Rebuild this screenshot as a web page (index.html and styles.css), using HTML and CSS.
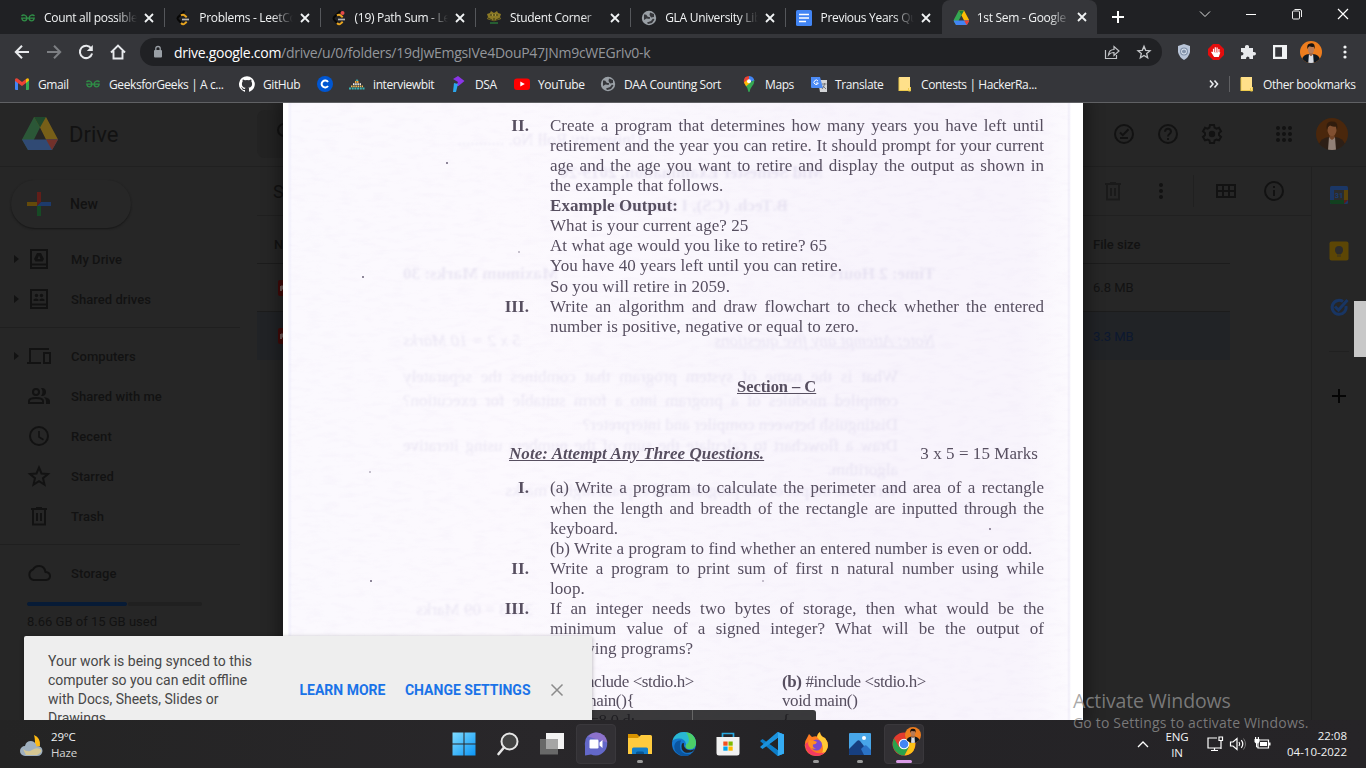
FILE: index.html
```html
<!DOCTYPE html>
<html lang="en">
<head>
<meta charset="utf-8">
<title>1st Sem - Google Drive</title>
<link rel="stylesheet" href="styles.css">
</head>
<body>
<svg class="defs" width="0" height="0">
  <defs>
    <symbol id="close" viewBox="0 0 16 16"><path d="M4 4l8 8M12 4l-8 8" stroke="#f1f3f4" stroke-width="1.8" fill="none"/></symbol>
    <symbol id="gfg" viewBox="0 0 16 16"><path d="M1.500 6C3 4.300 6.500 4.600 7 8.200C6.500 11.800 2.500 11.800 1.800 8.200H14.200C13.500 11.800 9.500 11.800 9 8.200C9.500 4.600 13 4.300 14.500 6" stroke="#2f8d46" stroke-width="1.300" fill="none"/></symbol>
    <symbol id="leet" viewBox="0 0 16 16"><path d="M9.500 1L3 7.200q-1 1.200 0 2.400l3.500 3.600" stroke="#070706" stroke-width="2" fill="none"/><path d="M6 5.500q2-1.500 4 .2l1.700 1.500M6 13q2.500 2.500 4 .3l1.700-1.600" stroke="#e7a41f" stroke-width="2" fill="none"/><path d="M7 9.500h7" stroke="#b3b3b3" stroke-width="1.700"/></symbol>
    <symbol id="globe" viewBox="0 0 16 16"><circle cx="8" cy="8" r="7.200" fill="#9aa0a6"/><path d="M3 4.500q2.500-.5 3 1.200t3 1.300l-.3 2-3.200-.4L3 10zM9 2.500l4 1.500v3l-3 .5L8.500 5zM6 12.500l4-1.500 2-2.500 1.500 1-2.500 3.500-4 1z" fill="#35363a"/></symbol>
    <symbol id="drive" viewBox="0 0 36 33"><path d="M12 0h12l-6 10.500L12 22.500 6 33 0 22.500z" fill="#34a853"/><path d="M12 0h12l12 22.500H24L18 10.500z" fill="#fbbc04"/><path d="M0 22.500h36L30 33H6z" fill="#4285f4"/><path d="M24 22.500h12L30 33z" fill="#ea4335"/><path d="M12 0h12l-6 10.500z" fill="#188038"/></symbol>
    <symbol id="folder" viewBox="0 0 16 16"><path d="M2 1h11v10.500h1V15H2z" fill="#ffe08a"/><path d="M2 15V1.500M2 14.500h11M13.500 11v4h-2v-3" stroke="#eecb4c" fill="none"/></symbol>
    <symbol id="star" viewBox="0 0 24 24"><path d="M12 3.500l2.500 6 6.500.5-5 4.200 1.500 6.400L12 17.200l-5.500 3.400L8 14.200 3 10l6.500-.5z" fill="none" stroke="currentColor" stroke-width="2"/></symbol>
    <symbol id="face" viewBox="0 0 32 32"><path d="M3 26q2-6 10-7h6q8 1 10 7l-4 6H7z" fill="#101820"/><path d="M13 19l3 2 3-2 1 13h-8z" fill="#d9dce2"/><path d="M13.500 15h5v5l-2.500 2-2.500-2z" fill="#9c6544"/><ellipse cx="16" cy="12" rx="4.500" ry="6" fill="#b87b56"/><path d="M11 12Q9 4 15 3.500 23 2.500 21 12l-1-3.500q-4 .5-6-1l-2 1.500z" fill="#17120f"/></symbol>
    <symbol id="trash" viewBox="0 0 24 24"><path d="M4 5h16M9 4h6M6 5v15.500h12V5M10 9v8M14 9v8" fill="none" stroke="currentColor" stroke-width="2"/></symbol>
    <symbol id="pdf" viewBox="0 0 16 16"><rect width="16" height="16" rx="2" fill="#440b09"/><path d="M3 6v5M3 6.500h2v2H3" stroke="#77615f" fill="none"/></symbol>
  </defs>
</svg>

<header class="tabs">
  <div class="tab"><svg class="i16"><use href="#gfg"/></svg><span class="title">Count all possible</span><svg class="i16"><use href="#close"/></svg></div>
  <div class="tab"><svg class="i16"><use href="#leet"/></svg><span class="title">Problems - LeetCode</span><svg class="i16"><use href="#close"/></svg></div>
  <div class="tab"><svg class="i16" viewBox="0 0 16 16"><use href="#leet"/><circle cx="11.500" cy="3" r="2" fill="#e44b4b"/></svg><span class="title">(19) Path Sum - LeetCode</span><svg class="i16"><use href="#close"/></svg></div>
  <div class="tab"><svg class="i16" viewBox="0 0 16 16"><path d="M1 4l3-1 1-2 3 2 3-2 1 2 3 1-1 3 1 2-3 1-4 1-4-1-3-1 1-2z" fill="#8c7a25"/><path d="M2 8l4 2M14 8l-4 2M4 5h8M8 8v5" stroke="#3d3b19" fill="none"/><path d="M4 12h8v2H4z" fill="#255d32"/><path d="M6 5h1M9 5h1" stroke="#e7cf61"/></svg><span class="title">Student Corner</span><svg class="i16"><use href="#close"/></svg></div>
  <div class="tab"><svg class="i16"><use href="#globe"/></svg><span class="title">GLA University Library</span><svg class="i16"><use href="#close"/></svg></div>
  <div class="tab nosep"><svg class="i16" viewBox="0 0 16 16"><rect width="16" height="16" rx="1.500" fill="#4285f4"/><path d="M3 4.500h10M3 8h10M3 11.500h7" stroke="#fff" stroke-width="1.600"/></svg><span class="title">Previous Years Question</span><svg class="i16"><use href="#close"/></svg></div>
  <div class="tab active"><svg class="i16" viewBox="-1 -2 38 37"><use href="#drive"/></svg><span class="title">1st Sem - Google Drive</span><svg class="i16"><use href="#close"/></svg></div>
  <svg class="newtab" viewBox="0 0 14 14"><path d="M7 1v12M1 7h12" stroke="#fff" stroke-width="2"/></svg>
  <div class="winctl">
    <svg viewBox="0 0 14 14"><path d="M2 4.500l5 5 5-5" stroke="#ddd" fill="none"/></svg>
    <svg viewBox="0 0 14 14"><path d="M2 7.500h10" stroke="#fff"/></svg>
    <svg viewBox="0 0 14 14"><path d="M2.500 5q0-1 1-1h5q1 0 1 1v6q0 1-1 1h-5q-1 0-1-1zM4.500 2.500h5.500q1.500 0 1.500 1.500v6" stroke="#eee" fill="none"/></svg>
    <svg viewBox="0 0 14 14"><path d="M2 2l10 10M12 2L2 12" stroke="#fff" stroke-width="1.200"/></svg>
  </div>
</header>

<nav class="toolbar">
  <svg class="i16" viewBox="0 0 16 16"><path d="M15 8H2M8 1.800L1.800 8 8 14.200" stroke="#e8eaed" stroke-width="2" fill="none"/></svg>
  <svg class="i16" viewBox="0 0 16 16"><path d="M1 8h13M8 1.800L14.200 8 8 14.200" stroke="#7d7f83" stroke-width="2" fill="none"/></svg>
  <svg class="i16" viewBox="0 0 16 16"><path d="M13.300 4.500A6.200 6.200 0 1 0 14.100 9.500" stroke="#e8eaed" stroke-width="2" fill="none"/><path d="M14.800 1v6H8.800z" fill="#e8eaed"/></svg>
  <svg class="i16" viewBox="0 0 16 16"><path d="M1 8.500L8 1.500l7 7M3.500 7v7.500h9V7" stroke="#e8eaed" stroke-width="1.900" fill="none"/></svg>
  <div class="omnibox">
    <svg class="i16" viewBox="0 0 16 16"><rect x="4" y="6" width="8" height="7.500" rx="1" fill="#9aa0a6"/><path d="M5.800 6V4.500q0-2 2.200-2t2.200 2V6" stroke="#9aa0a6" stroke-width="1.300" fill="none"/></svg>
    <span class="url"><b>drive.google.com</b>/drive/u/0/folders/19dJwEmgsIVe4DouP47JNm9cWEGrIv0-k</span>
    <svg class="i16" viewBox="0 0 16 16"><path d="M1.500 6v8.500h11V11" stroke="#c3c5c8" stroke-width="1.200" fill="none"/><path d="M4.500 11q.5-5.500 5.500-5.500V2.500L15 7l-5 4.500V8.500Q6.500 8.300 4.500 11z" stroke="#c3c5c8" stroke-width="1.200" fill="none"/></svg>
    <svg class="i16 ostar"><use href="#star"/></svg>
  </div>
  <svg class="i16" viewBox="0 0 16 16"><path d="M8 0l6 2v6q-1 5-6 8-5-3-6-8V2z" fill="#b9c5d8"/><circle cx="8" cy="7.500" r="4" fill="#8393ab"/><circle cx="8" cy="7.500" r="2.500" stroke="#dfe7f2" fill="none"/></svg>
  <svg class="i16" viewBox="0 0 16 16"><path d="M5 0h6l5 5v6l-5 5H5l-5-5V5z" fill="#e40d0d"/><path d="M5.500 9V4.800M7.300 8V3.300M9.100 8V3.500M10.900 9V5M4 8.500l2.500 4h3.800l1.200-3.500z" stroke="#fff" stroke-width="1.200" fill="#fff"/></svg>
  <svg class="i16" viewBox="0 0 16 16"><path d="M1 4h4q-.5-3 2-3t2 3h4v4q3-.5 3 1.500T13 11.500V15H9.500q.3-2.500-1.700-2.500T6 15H1v-3.500q2.500.2 2.500-1.700T1 8z" fill="#e8eaed"/></svg>
  <svg class="i16" viewBox="0 0 16 16"><path d="M1 1h14v14H1zM3.200 3.200v9.600H10V3.200z" fill="#f1f3f4" fill-rule="evenodd"/></svg>
  <span class="pface"><svg viewBox="0 0 32 32"><use href="#face"/></svg></span>
  <svg class="i16 kebab" viewBox="0 0 16 16"><g fill="#f1f3f4"><circle cx="8" cy="3" r="1.600"/><circle cx="8" cy="8" r="1.600"/><circle cx="8" cy="13" r="1.600"/></g></svg>
</nav>

<nav class="bookmarks">
  <div><svg class="i16" viewBox="0 0 16 16"><path d="M1 3.500h3V14H2q-1 0-1-1z" fill="#4285f4"/><path d="M12 3.500h3V13q0 1-1 1h-2z" fill="#34a853"/><path d="M1 4q0-2.500 2.500-1.500L8 6l4-3v4L8 10 1 5z" fill="#ea4335"/><path d="M12 3q3-2 3 1.500L12 7z" fill="#fbbc04"/></svg>Gmail</div>
  <div><svg class="i16"><use href="#gfg"/></svg>GeeksforGeeks | A c...</div>
  <div><svg class="i16" viewBox="0 0 16 16"><path d="M8 .2a8 8 0 0 0-2.500 15.600c.4.100.5-.2.500-.4v-1.500c-2.200.5-2.700-1-2.700-1-.400-.9-.9-1.100-.9-1.100-.7-.5.100-.5.100-.5.800.1 1.200.8 1.200.8.700 1.200 1.900.9 2.300.7.100-.5.300-.9.500-1.100-1.800-.2-3.600-.9-3.600-4 0-.9.300-1.600.8-2.100-.1-.2-.4-1 .1-2.100 0 0 .7-.2 2.200.8a7.500 7.500 0 0 1 4 0c1.500-1 2.200-.8 2.200-.8.500 1.100.2 1.900.1 2.100.5.500.8 1.200.8 2.100 0 3.100-1.900 3.700-3.600 3.900.3.300.5.800.5 1.500v2.200c0 .2.200.5.600.4A8 8 0 0 0 8 .2z" fill="#fff"/></svg>GitHub</div>
  <div><svg class="i16" viewBox="0 0 16 16"><circle cx="8" cy="8" r="8" fill="#0056d2"/><path d="M11 6a3.500 3.500 0 1 0 0 4" stroke="#fff" stroke-width="2" fill="none"/></svg></div>
  <div><svg class="i16" viewBox="0 0 16 16"><path d="M6.500 5l1.500-2 1.500 2z" fill="#3ab2b1"/><path d="M6 6h4" stroke="#f4a63b" stroke-width="1.800" stroke-dasharray="1.500 .5"/><path d="M4 8.200h8" stroke="#eee" stroke-width="1.800" stroke-dasharray="1.500 .7"/><path d="M2 10.400h12" stroke="#f4bd56" stroke-width="1.800" stroke-dasharray="1.500 .7"/><path d="M0 12.500h16" stroke="#3ab2b1" stroke-width="1.800" stroke-dasharray="2 .7"/></svg>interviewbit</div>
  <div><svg class="i16" viewBox="0 0 16 16"><path d="M2 3l5-3 6.500 5-6 5H5l2-4z" fill="#8a35e8"/><path d="M3 7l4 1-2 8H2z" fill="#2ba7ee"/></svg>DSA</div>
  <div><svg class="i16" viewBox="0 0 16 16"><rect y="2.500" width="16" height="11.500" rx="3" fill="#f00"/><path d="M6.300 5.500v5l4.500-2.500z" fill="#fff"/></svg>YouTube</div>
  <div><svg class="i16"><use href="#globe"/></svg>DAA Counting Sort</div>
  <div><svg class="i16" viewBox="0 0 16 16"><path d="M8 0Q3 .2 2.700 5q0 2 2 4.500L8 6z" fill="#ea4335"/><path d="M8 0q5 .3 5.300 5L8 6z" fill="#4285f4"/><path d="M13.200 4q.5 3-2 6-2 2.500-2.500 5.500-.7 1-1.400 0Q7 12 4.500 9.500z" fill="#34a853"/><path d="M3 6.500L6 4l3 3-3.800 3.200z" fill="#fbbc04"/><circle cx="8" cy="5.200" r="2" fill="#fff"/></svg>Maps</div>
  <div><svg class="i16" viewBox="0 0 16 16"><path d="M7 4h9v12H9z" fill="#d3d5d8"/><path d="M0 1h9l3 11H1q-1 0-1-1z" fill="#4c8bf5"/><path d="M7 5a2.200 2.200 0 1 0 .3 2H5" stroke="#fff" fill="none"/><path d="M11 8h4.500M13.500 7v1q-.5 3-2.500 5M12 10l3 3" stroke="#73777c" fill="none"/></svg>Translate</div>
  <div><svg class="i16"><use href="#folder"/></svg>Contests | HackerRa...</div>
  <div class="more"><svg viewBox="0 0 10 10"><path d="M1 1.500L4 5 1 8.500M5.500 1.500l3 3.500-3 3.500" stroke="#e8eaed" stroke-width="1.600" fill="none"/></svg></div>
  <div class="other"><svg class="i16"><use href="#folder"/></svg>Other bookmarks</div>
</nav>

<main class="content">
  <section class="drive">
    <aside class="side">
      <div class="brand"><svg viewBox="0 0 36 33"><use href="#drive"/></svg><span>Drive</span></div>
      <div class="newrow"><div class="new"><svg viewBox="0 0 24 24"><path d="M10 0h4v10l-4 4z" fill="#611e19"/><path d="M0 10h10v4H0z" fill="#644a0a"/><path d="M14 10h10v4H10z" fill="#1d3a6b"/><path d="M10 14h4v10h-4z" fill="#174a25"/></svg>New</div></div>
      <div class="group">
        <div class="item"><i class="arrow"></i><svg viewBox="0 0 24 24"><path d="M4 3h16v18H4zM4 17.500h16" fill="none" stroke="#121212" stroke-width="2"/><path d="M10 6h4l3 6-1.500 2.500h-7L7 12zM12 8.500L10.500 12h3z" fill="#121212" fill-rule="evenodd"/></svg>My Drive</div>
        <div class="item"><i class="arrow"></i><svg viewBox="0 0 24 24"><path d="M4 3h16v18H4zM4 17.500h16" fill="none" stroke="#121212" stroke-width="2"/><circle cx="9.500" cy="8.500" r="1.700" fill="#121212"/><circle cx="14.500" cy="8.500" r="1.700" fill="#121212"/><path d="M6.500 14v-1.500Q9 10.500 11.500 12.500V14zM12.500 14v-1.500q2.500-2 5 0V14z" fill="#121212"/></svg>Shared drives</div>
      </div>
      <div class="group">
        <div class="item"><i class="arrow"></i><svg viewBox="0 0 24 24"><path d="M22 5H3v13M0 19h14M17 9h6v10h-6z" fill="none" stroke="#121212" stroke-width="2"/></svg>Computers</div>
        <div class="item"><i></i><svg viewBox="0 0 24 24"><circle cx="9" cy="8" r="3" fill="none" stroke="#121212" stroke-width="2"/><path d="M2 19v-2q0-3 7-3t7 3v2z" fill="none" stroke="#121212" stroke-width="2"/><path d="M14 4q5-.5 5 4t-5 4q3-4 0-8zM17 13q6 1 6 4v3h-4v-3q0-2-2-4z" fill="#121212"/></svg>Shared with me</div>
        <div class="item"><i></i><svg viewBox="0 0 24 24"><circle cx="12" cy="12" r="9" fill="none" stroke="#121212" stroke-width="2"/><path d="M12 7v6l4.500 2.700" fill="none" stroke="#121212" stroke-width="1.600"/></svg>Recent</div>
        <div class="item"><i></i><svg><use href="#star"/></svg>Starred</div>
        <div class="item"><i></i><svg><use href="#trash"/></svg>Trash</div>
      </div>
      <div class="group last">
        <div class="item"><i></i><svg viewBox="0 0 24 24"><path d="M6.500 19a5.500 5.500 0 0 1-.5-10.500Q8 5 12 5q5.500 0 6.500 6 4.500.5 4.500 4t-4 4z" fill="none" stroke="#121212" stroke-width="2"/></svg>Storage</div>
        <div class="meter"><b></b><b></b></div>
        <div class="quota">8.66 GB of 15 GB used</div>
      </div>
    </aside>
    <section class="main">
      <div class="head">
        <div class="search"><svg viewBox="0 0 24 24"><circle cx="10" cy="10" r="6" fill="none" stroke="#121212" stroke-width="2"/><path d="M14 14l6 6" stroke="#121212" stroke-width="2"/></svg></div>
        <svg viewBox="0 0 24 24"><circle cx="12" cy="12" r="9"/><path d="M8 10.500l2.800 2.700 5.700-6M8 16h8"/></svg>
        <svg viewBox="0 0 24 24"><circle cx="12" cy="12" r="9"/><path d="M9 9.800q.2-3 3-3t3 2.800Q15 11 13.500 12 12 13 12 14.500M12 16v2"/></svg>
        <svg viewBox="0 0 24 24"><path d="M10 3h4l.6 2.700 1.800 1 2.600-.9 2 3.500-2 1.800v2l2 1.800-2 3.500-2.600-.9-1.800 1L14 21h-4l-.6-2.500-1.800-1-2.600.9-2-3.500 2-1.800v-2L3 9.300l2-3.500 2.600.9 1.800-1z"/><circle cx="12" cy="12" r="3.200" class="solid"/></svg>
        <svg class="apps" viewBox="0 0 24 24"><g class="solid"><circle cx="6" cy="6" r="2"/><circle cx="12" cy="6" r="2"/><circle cx="18" cy="6" r="2"/><circle cx="6" cy="12" r="2"/><circle cx="12" cy="12" r="2"/><circle cx="18" cy="12" r="2"/><circle cx="6" cy="18" r="2"/><circle cx="12" cy="18" r="2"/><circle cx="18" cy="18" r="2"/></g></svg>
        <span class="avatar"><svg viewBox="0 0 32 32"><use href="#face"/></svg></span>
      </div>
      <div class="body">
        <div class="files">
          <div class="crumb"><span>Shared with me</span>
            <svg class="dim"><use href="#trash"/></svg>
            <svg viewBox="0 0 24 24"><g class="solid"><circle cx="12" cy="6" r="2"/><circle cx="12" cy="12" r="2"/><circle cx="12" cy="18" r="2"/></g></svg>
            <i></i>
            <svg viewBox="0 0 24 24"><path d="M3 6h18v12H3zM3 12h18M9 6v12M15 6v12"/></svg>
            <svg viewBox="0 0 24 24"><circle cx="12" cy="12" r="9"/><path d="M12 11v6M12 7v2"/></svg>
          </div>
          <div class="row cap"><span>Name</span><span>File size</span></div>
          <div class="row"><svg><use href="#pdf"/></svg><span>6.8 MB</span></div>
          <div class="row sel"><svg><use href="#pdf"/></svg><span>3.3 MB</span></div>
        </div>
        <div class="rail">
          <svg viewBox="0 0 20 20"><rect x="1" y="1" width="18" height="18" rx="1.500" fill="#1b3766"/><path d="M15 5h4v10h-4z" fill="#5c450a"/><path d="M1 15h14v4H2.500Q1 19 1 17.500z" fill="#12401f"/><path d="M15 15h4l-4 4z" fill="#5a1c18"/><path d="M5 5h10v10H5z" fill="#2c2c2c"/><text x="10" y="12.700" text-anchor="middle" font-size="7.500">31</text></svg>
          <svg viewBox="0 0 20 20"><rect x=".500" y=".500" width="19" height="19" rx="2" fill="#5c4605"/><circle cx="10" cy="9" r="4" fill="#2c2c2c"/><path d="M8 12h4v1H8zM8 15h4" fill="#2c2c2c" stroke="#2c2c2c" stroke-width=".8"/></svg>
          <svg viewBox="0 0 20 20"><path d="M14 4.500A7 7 0 1 0 17 9" stroke="#183563" stroke-width="3" fill="none"/><path d="M6 9.500l3.500 3.500L18.500 3" stroke="#183563" stroke-width="3" fill="none"/></svg>
          <hr>
          <svg viewBox="0 0 20 20"><path d="M10 3v14M3 10h14" stroke="#050505" stroke-width="2"/></svg>
        </div>
      </div>
    </section>
  </section>

  <article class="page">
    <svg class="grain" width="781" height="617"><filter id="g"><feTurbulence type="fractalNoise" baseFrequency=".06 .2" numOctaves="3" seed="4"/><feColorMatrix values="0 0 0 0 .6  0 0 0 0 .5  0 0 0 0 .75  .9 0 0 0 -.4"/></filter><rect width="781" height="617" filter="url(#g)"/></svg>
    <svg class="specks" width="800" height="617"><g fill="#6a6077"><circle cx="164" cy="60" r="1"/><circle cx="80" cy="174" r="1"/><circle cx="88" cy="478" r="1"/><circle cx="87" cy="369" r=".7"/><circle cx="707" cy="426" r=".9"/><circle cx="480" cy="478" r=".7"/><circle cx="236" cy="149" r=".7"/><circle cx="372" cy="184" r=".6"/></g></svg>
    <div class="ghost" aria-hidden="true">
      <p class="g1">University Roll No. ...........</p>
      <p class="g2">Mid Semester Examination, 2019-20</p>
      <p class="g3">B.Tech. (CS), I Semester</p>
      <p class="g5"><span>Time: 2 Hours</span><span>Maximum Marks: 30</span></p>
      <p class="g6"><u>Note: Attempt any five questions</u><span>5 x 2 = 10 Marks</span></p>
      <p class="g7">What is the name of system program that combines the separately compiled modules of a program into a form suitable for execution? Distinguish between compiler and interpreter?</p>
      <p class="g8">Draw a flowchart to calculate the sum of the numbers using iterative algorithm.</p>
      <p class="g9">Write the output of the program and explain higher marks</p>
      <p class="g10">3 x 3 = 09 Marks</p>
    </div>
    <div class="text">
      <div class="q"><b>II.</b><div>
        <p class="j">Create a program that determines how many years you have left until</p>
        <p class="j">retirement and the year you can retire. It should prompt for your current</p>
        <p class="j">age and the age you want to retire and display the output as shown in</p>
        <p>the example that follows.</p>
        <p><strong>Example Output:</strong></p>
        <p>What is your current age? 25</p>
        <p>At what age would you like to retire? 65</p>
        <p>You have 40 years left until you can retire.</p>
        <p>So you will retire in 2059.</p></div></div>
      <div class="q"><b>III.</b><div>
        <p class="j">Write an algorithm and draw flowchart to check whether the entered</p>
        <p>number is positive, negative or equal to zero.</p></div></div>
      <h2><u>Section – C</u></h2>
      <div class="note"><u>Note: Attempt Any Three Questions.</u><span>3 x 5 = 15 Marks</span></div>
      <div class="q"><b>I.</b><div>
        <p class="j">(a) Write a program to calculate the perimeter and area of a rectangle</p>
        <p class="j">when the length and breadth of the rectangle are inputted through the</p>
        <p>keyboard.</p>
        <p>(b) Write a program to find whether an entered number is even or odd.</p></div></div>
      <div class="q"><b>II.</b><div>
        <p class="j">Write a program to print sum of first n natural number using while</p>
        <p>loop.</p></div></div>
      <div class="q"><b>III.</b><div>
        <p class="j">If an integer needs two bytes of storage, then what would be the</p>
        <p class="j">minimum value of a signed integer? What will be the output of</p>
        <p>following programs?</p></div></div>
      <div class="code">
        <div><p><strong>(a)</strong> #include &lt;stdio.h&gt;</p><p>void main(){</p><p>float f=8.0,d;</p></div>
        <div><p><strong>(b)</strong> #include &lt;stdio.h&gt;</p><p>void main()</p><p>{</p></div>
      </div>
    </div>
  </article>
  <div class="pager"><i></i></div>
  <div class="thumb"></div>
  <div class="snack">
    <p>Your work is being synced to this computer so you can edit offline with Docs, Sheets, Slides or Drawings.</p>
    <b>LEARN MORE</b><b>CHANGE SETTINGS</b>
    <svg viewBox="0 0 14 14"><path d="M1.500 1.500l11 11M12.500 1.500l-11 11" stroke="#8b8b8b" stroke-width="1.500"/></svg>
  </div>
</main>

<footer class="taskbar">
  <div class="weather">
    <svg viewBox="0 0 24 24"><path d="M14 1q7 3 6 11l-6 2q2-6 0-13z" fill="#fdb913"/><path d="M5 22a5 5 0 0 1 0-10q1-5 6-5 5 .5 5.500 5.500Q22 11.500 22.500 17 22 22 17 22z" fill="#9fb0bf"/><path d="M3 15q5 4 9 1t8-1-3 6H6z" fill="#d5c793"/></svg>
    <p>29°C<br><span>Haze</span></p>
  </div>
  <div class="apps-row">
    <span><svg viewBox="0 0 24 24"><defs><linearGradient id="w" x2="1" y2="1"><stop stop-color="#7fdcff"/><stop offset="1" stop-color="#0b95f5"/></linearGradient></defs><path d="M.5.500h11v11H.5zM12.500.500h11v11h-11zM.5 12.500h11v11H.5zM12.500 12.500h11v11h-11z" fill="url(#w)"/></svg></span>
    <span><svg viewBox="0 0 24 24"><circle cx="13.500" cy="9.500" r="8" fill="#444" stroke="#e6e6e6" stroke-width="2"/><path d="M8 15.500L2.500 22" stroke="#e6e6e6" stroke-width="2.600" stroke-linecap="round"/></svg></span>
    <span><svg viewBox="0 0 24 24"><path d="M6 1h18v16H6z" fill="#f3f3f3"/><path d="M0 7h18v15.500H0z" fill="#686868"/><path d="M6 7h12v10H6z" fill="#a5a5a5"/></svg></span>
    <span class="tile"><svg viewBox="0 0 24 24"><path d="M12 .5a11.500 11.500 0 1 1-5 22L1 23.500 1 14Q-.5 2 12 .5z" fill="#6368c9"/><path d="M12 .5q10 .5 11.500 10L4 4.500Q7 .8 12 .5z" fill="#8d72cb"/><rect x="5.500" y="7.500" width="9" height="9" rx="1.200" fill="#fff"/><path d="M15.500 10.500l3-2.500v8l-3-2.500z" fill="#fff"/></svg></span>
    <span class="run"><svg viewBox="0 0 24 24"><path d="M0 2h9l2.500 2.500V8H0z" fill="#d89300"/><path d="M0 6h10l3-3h9.500q1.500 0 1.500 1.500V22H0z" fill="#ffcb3e"/><path d="M4 22v-5q0-1.500 1.500-1.500h13q1.500 0 1.500 1.500v5z" fill="#147fca"/><path d="M8 22v-1q0-1.500 1.500-1.500h5q1.500 0 1.500 1.500v1z" fill="#075594"/></svg></span>
    <span><svg viewBox="0 0 24 24"><circle cx="12" cy="12" r="12" fill="#1477cf"/><path d="M.2 9Q3 0 12 0q11 .5 12 10.500 0 6-6 6.500-6 0-4-5Q13 6.500 7 6.500 2 6.500.2 9z" fill="#29b7d2"/><path d="M14 .2q9 1 10 10.500 0 6-6 6.500-5.500 0-4-4.500Q20 9 14 .2z" fill="#4cce68"/><path d="M8 13q-1 10 11 9-5 3.500-10 1.500Q1 20 2.500 13 4 8 9 8.500 8 10 8 13z" fill="#0b559f"/><path d="M12 11q-1 4 3 6.500 4 1.500 8-.500-4 5-10 3.500-5-3-3-9z" fill="#242426"/></svg></span>
    <span><svg viewBox="0 0 24 24"><path d="M6.500 6V1.500h11V6" fill="none" stroke="#29a9e0" stroke-width="1.700"/><path d="M.5 5h23v16q0 2.500-2.500 2.500H3Q.5 23.500.5 21z" fill="#f1f1f1"/><path d="M7.300 9.500h4.300v4.200H7.300z" fill="#f25022"/><path d="M12.500 9.500h4.200v4.200h-4.200z" fill="#7fba00"/><path d="M7.300 14.500h4.300v4.200H7.300z" fill="#00a4ef"/><path d="M12.500 14.500h4.200v4.200h-4.200z" fill="#ffb900"/></svg></span>
    <span><svg viewBox="0 0 24 24"><path d="M17.500 0L24 2.500v19L17.500 24 0 9l2.500-2L18 18z" fill="#0c7cc7"/><path d="M17.500 24L24 21.500v-19L17.500 0 0 15l2.500 2L18 6z" fill="#1b92dd"/><path d="M18 6v12l-7.500-6z" fill="#242426"/><path d="M18 0.200L24 2.500v19L18 23.800z" fill="#35acf3"/></svg></span>
    <span class="run"><svg viewBox="0 0 24 24"><path d="M3 6L5 2l3 3q3-1 5-.5Q13 2 16 0q0 4 5 6 4 5 2.500 10Q21 24 12 24 2 23.500.8 14 .5 9 3 6z" fill="#ff7a21"/><path d="M16 0q0 4 5 6 4 5 2.500 10-2 5-6 6.500Q22 14 13 5q0-3 3-5z" fill="#ffca35"/><path d="M1 12q1 11 11 12 6 0 9-4-7 3-12-1-5-3-3-10z" fill="#f43b62"/><circle cx="12.500" cy="13" r="5.500" fill="#7c4ad0"/><path d="M5 8q5 0 8 2-1 2.500-4 2.500-1 3 3 4-7 1-8-5z" fill="#ff8f22"/></svg></span>
    <span class="run"><svg viewBox="0 0 24 24"><rect x="1" y="1" width="22" height="22" rx="1" fill="#48a6e8"/><path d="M1 17L9 9q1.500-1.500 3 0l11 14H2q-1 0-1-1z" fill="#173f80"/><path d="M13 17l3-3q1.500-1.500 3 0l4 4v5H16z" fill="#2b73c5"/><circle cx="16" cy="6" r="2" fill="#fff"/></svg></span>
    <span class="tile run on"><svg viewBox="0 0 24 24"><circle cx="12" cy="12" r="11.500" fill="#e33b2e"/><path d="M2 6.200Q-1 13 2.500 18q4 5.500 10 5.500L17 15l-5-3-5 3z" fill="#2ba24c"/><path d="M12.500 23.500Q21 23 23 15q1-4-.5-8H12l5 8z" fill="#fbc116"/><circle cx="12" cy="12" r="5.300" fill="#fff"/><circle cx="12" cy="12" r="4.300" fill="#4285f4"/></svg><i class="mini"><svg viewBox="0 0 32 32"><use href="#face"/></svg></i></span>
  </div>
  <div class="tray">
    <svg class="up" viewBox="0 0 14 14"><path d="M2 10l5-5 5 5" stroke="#fff" stroke-width="1.300" fill="none"/></svg>
    <p class="lang">ENG<br>IN</p>
    <svg class="net" viewBox="0 0 18 18"><path d="M11 3H2v10h13V8M5 15.500h7M8.500 13v2.500M13 2h3.500v3.500H13zM15 5.500V14" stroke="#fff" stroke-width="1.200" fill="none"/></svg>
    <svg class="vol" viewBox="0 0 18 18"><path d="M1.500 7h2.500l4-3.500v11L4 11H1.500zM10 7q1.500 2 0 4M12.300 5.200q3 3.800 0 7.600" stroke="#fff" stroke-width="1.200" fill="none"/><path d="M14.500 3.500q4 5.500 0 11" stroke="#777" fill="none"/></svg>
    <svg class="bat" viewBox="0 0 18 18"><path d="M5 5h10.500v8H5z" fill="none" stroke="#fff" stroke-width="1.200"/><path d="M7 7h7v4H7zM15.500 7.500h2v3h-2zM1.500 4h5v3q-2.500 3-5 0zM2 2h1.200v2H2zM4.800 2H6v2H4.800z" fill="#fff"/><path d="M3.500 8v4H5" stroke="#fff" fill="none"/></svg>
    <p class="clock">22:08<br>04-10-2022</p>
  </div>
</footer>
<div class="watermark"><h3>Activate Windows</h3><p>Go to Settings to activate Windows.</p></div>
</body>
</html>
```

FILE: styles.css
```css
* { box-sizing: border-box; }
body { margin: 0; width: 1366px; height: 768px; overflow: hidden; display: flex; flex-direction: column; position: relative; background: #202124; font-family: "Open Sans", "Noto Sans", sans-serif; font-size: 12px; color: #f1f3f4; }
p, h2, h3 { margin: 0; font-weight: normal; }
svg { flex: none; display: block; }
.defs { position: absolute; }
.i16 { width: 16px; height: 16px; }

/* tab strip */
.tabs { height: 34px; flex: none; display: flex; align-items: stretch; padding-left: 10px; }
.tab { width: 155.300px; flex: none; display: flex; align-items: center; padding: 0 7px 0 10px; border-right: 1px solid #55575b; margin: 8px 0 7px; }
.tab.nosep { border-color: transparent; }
.title { flex: 1; margin: 0 4px 0 8px; white-space: nowrap; overflow: hidden; letter-spacing: -.3px; -webkit-mask-image: linear-gradient(90deg, #000 78%, transparent); mask-image: linear-gradient(90deg, #000 78%, transparent); }
.tab.active { margin: 0; padding: 0 7px 0 11px; border: 0; background: #35363a; border-radius: 8px 8px 0 0; }
.newtab { width: 14px; height: 14px; margin: 10px 0 0 14px; }
.winctl { display: flex; margin-left: 73px; padding-top: 7px; gap: 32px; }
.winctl svg { width: 14px; height: 14px; }

/* toolbar */
.toolbar { height: 36px; flex: none; display: flex; align-items: center; gap: 16px; padding: 0 0 0 14px; background: #35363a; }
.omnibox { width: 1022px; height: 28px; margin: 0 -2px 0 -2px; display: flex; align-items: center; background: #202124; border-radius: 14px; padding: 0 10px; }
.url { flex: 1; margin-left: 8px; font-size: 14px; color: #93969b; letter-spacing: -.28px; white-space: nowrap; }
.url b { font-weight: 400; color: #fff; }
.ostar { margin-left: 16px; color: #c3c5c8; }
.pface { width: 22px; height: 22px; margin: 0 -3px 0 -4px; background: #ed7d1e; border-radius: 50%; overflow: hidden; }
.pface svg { width: 22px; height: 22px; }
.kebab { margin-left: 2px; }

/* bookmarks */
.bookmarks { height: 33px; flex: none; background: #35363a; border-bottom: 1px solid #606164; padding: 0 0 4px 14px; display: grid; grid-template-columns: 71px 154px 78px 32px 102px 63px 86px 141px 70px 86px 312px 20px 1fr; align-items: center; white-space: nowrap; letter-spacing: -.400px; }
.bookmarks > div { display: flex; align-items: center; gap: 8px; }
.more svg { width: 10px; height: 10px; }
.bookmarks .other { border-left: 1px solid #5f6063; height: 16px; padding-left: 9px; }

/* drive */
.content { height: 617px; flex: none; position: relative; overflow: hidden; background: #262626; font-family: Roboto, sans-serif; color: #121212; }
.drive { display: flex; height: 617px; }
.side { width: 257px; flex: none; }
.brand { height: 64px; border-bottom: 1px solid #202020; display: flex; align-items: center; gap: 11px; padding-left: 22px; font-size: 22px; }
.brand svg { width: 36px; height: 33px; opacity: .38; margin-top: -2px; }
.newrow { height: 72px; padding: 13px 0 0 11px; }
.new { width: 120px; height: 48px; border-radius: 25px; background: #272727; box-shadow: 0 1px 2px #161616; display: flex; align-items: center; gap: 19px; padding-left: 16px; font-size: 14px; font-weight: 500; }
.new svg { width: 24px; height: 24px; }
.group { width: 240px; padding-bottom: 8px; margin-bottom: 8px; border-bottom: 1px solid #1f1f1f; }
.group.last { border: 0; }
.item { height: 40px; display: grid; grid-template-columns: 13px 44px 1fr; align-items: center; padding-left: 14px; font-size: 13px; font-weight: 500; letter-spacing: .05px; }
.item svg { width: 24px; height: 24px; }
.arrow { border: 4.500px solid transparent; border-left: 5px solid #121212; border-right: 0; width: 0; }
.meter { display: flex; gap: 1px; margin: 9px 0 0 27px; }
.meter b { height: 4px; width: 100px; border-radius: 2px; background: #071b36; }
.meter b + b { width: 74px; background: #202020; }
.quota { margin: 8px 0 0 27px; font-size: 13px; line-height: 15px; }

.main { flex: 1; }
.main svg { width: 24px; height: 24px; fill: none; stroke: #121212; stroke-width: 2; }
.main .solid { fill: #121212; stroke: none; }
.head { height: 64px; border-bottom: 1px solid #202020; display: flex; align-items: center; gap: 20px; padding-bottom: 2px; }
.search { width: 720px; height: 48px; border-radius: 8px; background: #232323; padding: 10px 0 0 17px; margin-right: 115px; }
.apps { margin-left: 28px; }
.avatar { width: 32px; height: 32px; border-radius: 50%; overflow: hidden; background: #4a270c; }
.main .avatar svg { width: 32px; height: 32px; stroke: none; opacity: .5; }
.body { display: flex; height: 553px; }
.files { width: 1054px; }
.crumb { height: 49px; border-bottom: 1px solid #202020; display: flex; align-items: center; gap: 24px; padding: 0 25px 0 16px; font-size: 18px; }
.crumb span { flex: 1; }
.crumb i { width: 1px; height: 32px; background: #202020; margin: 0 -4px 0 -4px; }
.crumb .dim { color: #1a1a1a; stroke: #1b1b1b; }
.row { width: 973px; height: 48px; border-bottom: 1px solid #1c1c1c; display: flex; align-items: center; padding-left: 21px; font-size: 13px; }
.row span:last-child { margin-left: 799px; }
.main .row svg { width: 16px; height: 16px; stroke: none; }
.row.cap { padding: 10px 0 0 17px; font-weight: 500; }
.row.cap span:first-child { width: 40px; }
.row.cap span:last-child { margin-left: 779px; }
.row.sel { background: #212326; color: #0c1830; border: 0; }
.rail { width: 55px; border-left: 1px solid #202020; display: flex; flex-direction: column; align-items: center; padding-top: 18px; gap: 36px; }
.main .rail svg { width: 20px; height: 20px; stroke: none; }
.rail text { fill: #1b3c72; stroke: none; font-family: Roboto, sans-serif; font-weight: 700; }
.rail hr { width: 20px; border: 0; height: 1px; background: #202020; margin: -2px 0 -2px; }

/* scanned page */
.page { position: absolute; left: 283px; top: 0; width: 800px; height: 617px; overflow: hidden; background: linear-gradient(90deg, #fff 5px, #fbf9fe 5px, #f3f2fc 7px, #fbf9fe 9px, #fcf9fe 220px, #faf7fd 400px, #f8f4fc 600px, #f8f4fc 740px, #fcfafe 784px, #f1eef9 786px, #fff 788px); box-shadow: 0 0 16px 4px rgba(0,0,0,.4); font-family: "Liberation Serif", serif; font-size: 17px; line-height: 20.150px; color: #574f60; }
.grain { position: absolute; left: 6px; top: 0; opacity: .16; }
.specks { position: absolute; left: 0; top: 0; }
.ghost { position: absolute; inset: 0; color: #a9a0cc; opacity: .2; filter: blur(.9px); }
.ghost p { position: absolute; transform: scaleX(-1); margin: 0; display: flex; justify-content: space-between; }
.ghost .g1 { left: 155px; top: 27px; width: 205px; }
.ghost .g2 { left: 210px; top: 60px; width: 330px; font-weight: bold; }
.ghost .g3 { left: 365px; top: 93px; width: 140px; white-space: nowrap; font-weight: bold; }
.ghost .g5 { left: 120px; top: 161px; width: 532px; font-weight: bold; }
.ghost .g6 { left: 120px; top: 228px; width: 532px; font-style: italic; }
.ghost .g7 { left: 120px; top: 262px; width: 495px; display: block; line-height: 24px; text-align: justify; }
.ghost .g8 { left: 120px; top: 331px; width: 495px; display: block; line-height: 24px; text-align: justify; }
.ghost .g9 { left: 120px; top: 378px; width: 495px; white-space: nowrap; }
.ghost .g10 { left: 120px; top: 497px; width: 130px; }
.text { position: relative; padding: 12.500px 39px 0 210px; filter: blur(.3px); letter-spacing: .055px; }
.q { display: grid; grid-template-columns: 36px 494px; column-gap: 21px; }
.q > b { text-align: right; font-weight: 700; }
.q p { white-space: nowrap; height: 20.150px; }
.q .j { text-align-last: justify; white-space: normal; letter-spacing: 0; }
.text h2 { font-size: 16.500px; font-weight: bold; text-align: left; padding: 40px 0 0 244px; letter-spacing: -.05px; }
.note { margin: 47px 6px 14px 16px; display: flex; justify-content: space-between; }
.note u { font-weight: bold; font-style: italic; }
.code { display: grid; grid-template-columns: 231px 1fr; padding: 12px 0 0 58px; font-size: 17px; letter-spacing: -.400px; line-height: 19.600px; white-space: nowrap; }

/* viewer overlays */
.pager { position: absolute; left: 550px; top: 607px; width: 266px; height: 20px; border-radius: 3px; background: rgba(20,20,22,.84); padding-left: 142px; }
.pager i { display: block; width: 1px; height: 20px; background: #666; }
.thumb { position: absolute; right: 0; top: 198px; width: 12px; height: 56px; background: #c8c8c8; }
.snack { position: absolute; left: 24px; top: 533px; width: 568px; height: 108px; background: #eee; border-radius: 2px; box-shadow: 0 1px 4px rgba(0,0,0,.3); display: flex; align-items: center; padding-left: 24px; font-size: 14px; color: #474747; }
.snack p { width: 216px; margin-right: 35.500px; line-height: 19px; }
.snack b { color: #1a73e8; font-weight: 700; margin-right: 19.500px; white-space: nowrap; }
.snack svg { width: 14px; height: 14px; }

/* taskbar */
.taskbar { height: 48px; flex: none; background: linear-gradient(90deg, #242424, #29272a 40%, #242326 60%, #262427); display: flex; position: relative; line-height: 16px; font-size: 11.500px; letter-spacing: -.2px; }
.weather { width: 442px; display: flex; padding: 9px 0 0 20px; gap: 7px; }
.weather svg { width: 24px; height: 24px; margin-top: 5px; }
.weather span { color: #d5d5d5; }
.apps-row { width: 484px; display: flex; }
.apps-row > span { width: 40px; height: 40px; margin: 4px 2px 0; border-radius: 4px; display: flex; align-items: center; justify-content: center; position: relative; }
.apps-row > span > svg { width: 24px; height: 24px; }
.apps-row .tile { background: #323034; border: 1px solid #3a383c; }
.run::after { content: ""; position: absolute; bottom: 1px; width: 6px; height: 3px; border-radius: 2px; background: #9a9a9a; }
.run.on::after { width: 16px; background: #d99be6; bottom: 0; }
.mini { position: absolute; right: 2px; top: 2px; width: 16px; height: 16px; border-radius: 50%; background: #ed7d1e; overflow: hidden; }
.mini svg { width: 16px; height: 16px; }
.tray { flex: 1; display: flex; align-items: flex-start; padding: 9px 19px 0 210px; }
.tray svg { width: 18px; height: 18px; margin-top: 6px; }
.tray .up { width: 14px; height: 14px; margin: 8px 0 0; }
.lang { width: 30px; text-align: center; margin: 0 14px 0 12px; }
.tray .net { margin-right: 5px; }
.tray .vol { margin-right: 6px; }
.clock { margin: -1px 0 0 auto; text-align: right; letter-spacing: 0; }
.watermark { position: absolute; left: 1073px; top: 687px; color: rgba(145,145,145,.78); white-space: nowrap; }
.watermark h3 { font-size: 19.500px; line-height: 27px; letter-spacing: -.15px; }
.watermark p { font-size: 14px; line-height: 18px; letter-spacing: .18px; }
```
